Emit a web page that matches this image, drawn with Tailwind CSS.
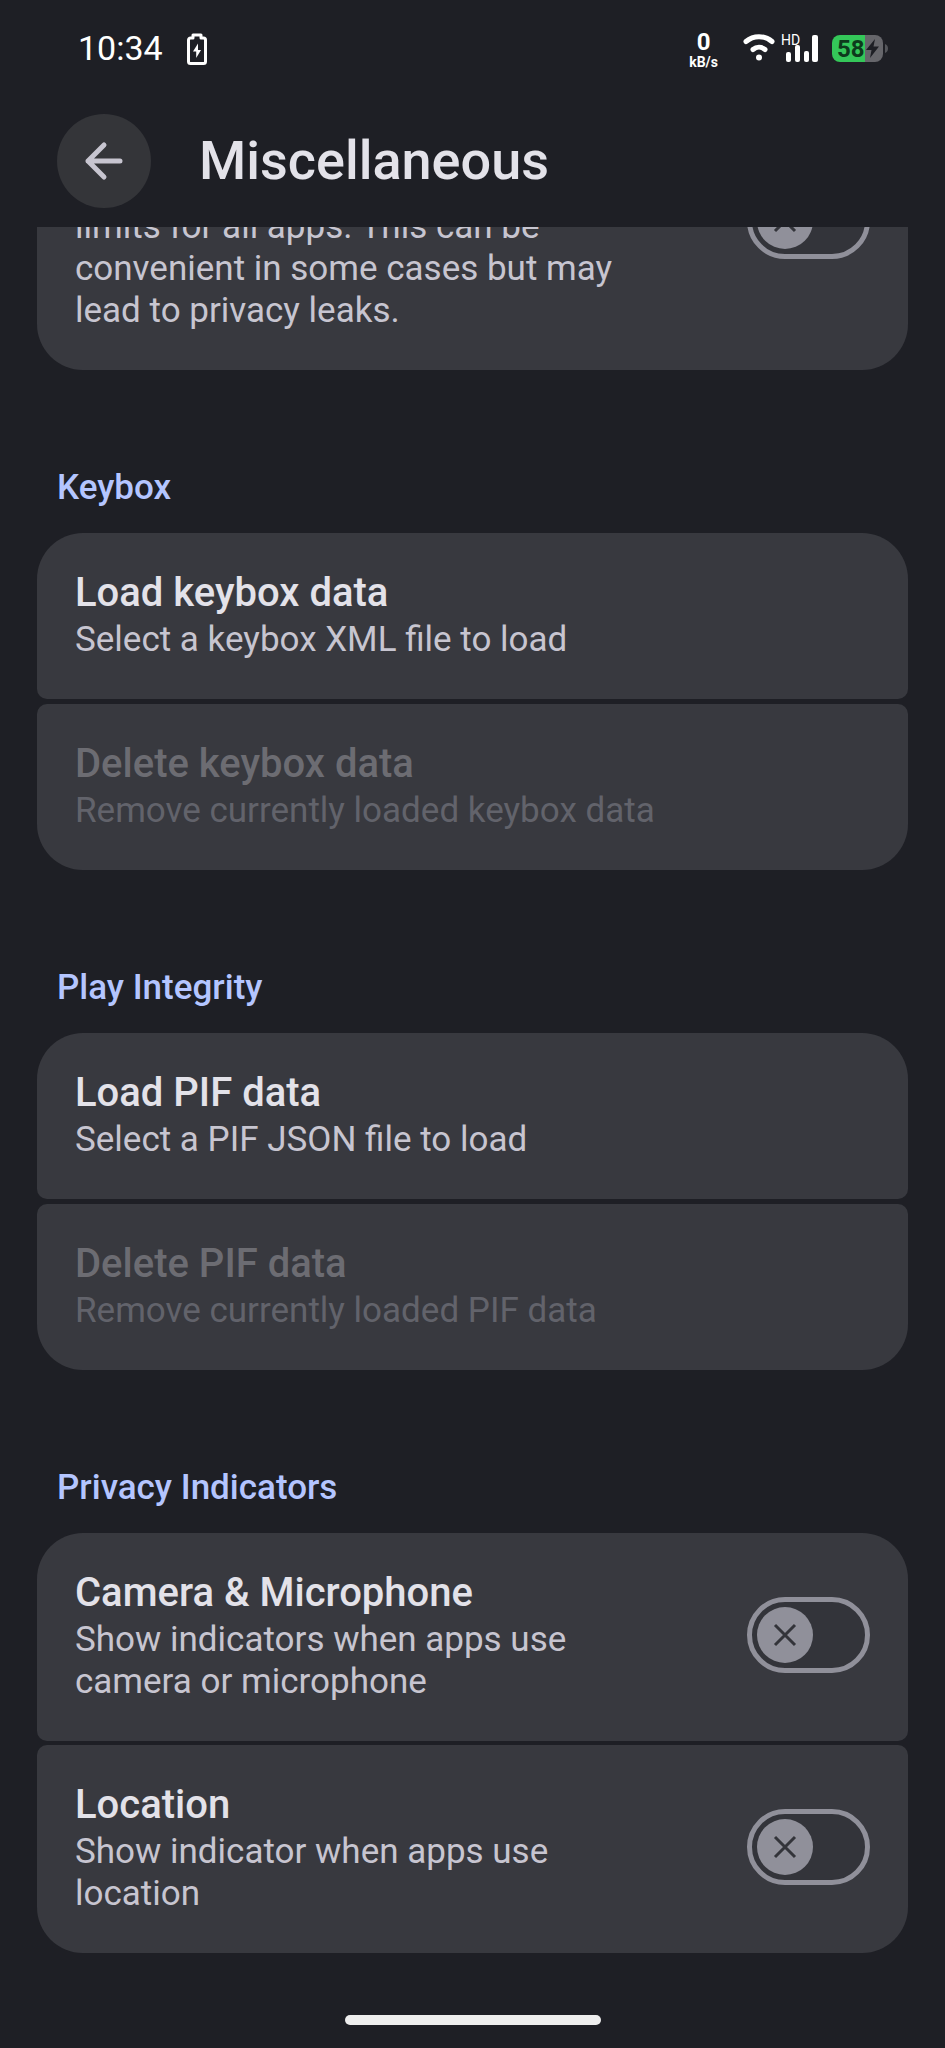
<!DOCTYPE html>
<html lang="en">
<head>
    <meta charset="UTF-8">
    <meta name="viewport" content="width=device-width, initial-scale=1.0">
    <title>Miscellaneous</title>
    <script src="https://cdn.jsdelivr.net/npm/@tailwindcss/browser@4"></script>
</head>
<body class="bg-[#1e1f25] text-[#e3e2e9] min-h-screen flex flex-col font-['Roboto','Liberation_Sans',sans-serif]">
    <!-- Status bar -->
    <div class="flex items-center justify-between h-24 pl-[78px] pr-14 text-white">
        <div class="flex items-center gap-6">
            <span class="text-[34px] leading-10">10:34</span>
            <svg class="w-5 h-9" viewBox="0 0 20 36" fill="none">
                <path d="M6 5h8v3h2.500a2 2 0 0 1 2 2v21.500a2 2 0 0 1-2 2h-13a2 2 0 0 1-2-2V10a2 2 0 0 1 2-2H6z" stroke="#fff" stroke-width="3" stroke-linejoin="round"/>
                <path d="M11 13.500 6 21.500h3.200V28l4.800-8h-3z" fill="#fff"/>
            </svg>
        </div>
        <div class="flex items-center">
            <div class="flex flex-col items-center pt-2 mr-6 font-bold">
                <span class="text-2xl leading-5">0</span>
                <span class="text-sm leading-5">kB/s</span>
            </div>
            <svg class="w-[34px] h-8 mr-1" viewBox="0 0 34 32" fill="none" stroke="#fff" stroke-width="5" stroke-linecap="round">
                <path d="M4 9.500C11.500 3 22.500 3 30 9.500"/>
                <path d="M11 17.500c3.500-3 8.500-3 12 0"/>
                <circle cx="17" cy="25.500" r="3" fill="#fff" stroke="none"/>
            </svg>
            <svg class="w-10 h-8 mr-3" viewBox="0 0 40 32">
                <text x="1" y="13" font-size="14" fill="#fff">HD</text>
                <g fill="#fff">
                    <rect x="6" y="20" width="5" height="10" rx="2"/>
                    <rect x="15" y="13" width="5" height="17" rx="2"/>
                    <rect x="24" y="19" width="5" height="11" rx="2"/>
                    <rect x="32" y="3" width="6" height="27" rx="2"/>
                </g>
            </svg>
            <svg class="w-[57px] h-[27px]" viewBox="0 0 57 27">
                <path d="M8 0h25v27H8a8 8 0 0 1-8-8V8a8 8 0 0 1 8-8z" fill="#34c759"/>
                <path d="M33 0h10a8 8 0 0 1 8 8v11a8 8 0 0 1-8 8H33z" fill="#66666b"/>
                <path d="M53 9c4 1 4 8 0 9z" fill="#55565b"/>
                <text x="5" y="22" font-size="24" font-weight="700" fill="#0d3a1c">58</text>
                <path d="M43 4 34 15h5.500L38 23l9-11.500h-5.500z" fill="#1e1f25"/>
            </svg>
        </div>
    </div>

    <!-- App bar -->
    <header class="flex items-center gap-12 px-[57px] pt-[18px] pb-[19px]">
        <button type="button" aria-label="Back" class="flex items-center justify-center size-[94px] rounded-full bg-[#343539]">
            <svg class="size-11" viewBox="0 0 44 44" fill="none" stroke="#c7c5d0" stroke-width="5" stroke-linecap="round" stroke-linejoin="round">
                <path d="M38 22H6M22 6 6 22l16 16"/>
            </svg>
        </button>
        <h1 class="text-[54px] leading-[64px] font-medium">Miscellaneous</h1>
    </header>

    <main class="px-[37px]">
        <!-- Card partly scrolled under the app bar -->
        <label class="flex items-end justify-between gap-20 h-[143px] overflow-hidden px-[38px] pb-[38px] rounded-b-[46px] bg-[#38393f]">
            <span class="text-[35px] leading-[42px] text-[#c7c5d0]">limits for all apps. This can be convenient in some cases but may lead to privacy leaks.</span>
            <span class="grid shrink-0 items-center mb-[73px]">
                <input type="checkbox" class="col-start-1 row-start-1 appearance-none w-[123px] h-[76px] rounded-full border-5 border-[#90909a] bg-[#33343a]">
                <svg class="col-start-1 row-start-1 size-14 ml-[10px] pointer-events-none" viewBox="0 0 56 56">
                    <circle cx="28" cy="28" r="28" fill="#90909a"/>
                    <path d="m18 18 20 20M38 18 18 38" stroke="#33343a" stroke-width="3"/>
                </svg>
            </span>
        </label>

        <section>
            <h2 class="pt-24 pb-[23px] pl-5 text-[35px] leading-[44px] font-medium text-[#b4c5ff]">Keybox</h2>
            <div class="flex flex-col gap-[5px]">
                <button type="button" class="block px-[38px] pt-[34px] pb-[38px] text-left bg-[#38393f] rounded-t-[46px] rounded-b-[10px]">
                    <span class="block text-[40px] leading-[52px] font-medium">Load keybox data</span>
                    <span class="block text-[35px] leading-[42px] text-[#c7c5d0]">Select a keybox XML file to load</span>
                </button>
                <button type="button" disabled class="block px-[38px] pt-[34px] pb-[38px] text-left bg-[#38393f] rounded-t-[10px] rounded-b-[46px]">
                    <span class="block text-[40px] leading-[52px] font-medium text-[#6c6c72]">Delete keybox data</span>
                    <span class="block text-[35px] leading-[42px] text-[#62636b]">Remove currently loaded keybox data</span>
                </button>
            </div>
        </section>

        <section>
            <h2 class="pt-24 pb-[23px] pl-5 text-[35px] leading-[44px] font-medium text-[#b4c5ff]">Play Integrity</h2>
            <div class="flex flex-col gap-[5px]">
                <button type="button" class="block px-[38px] pt-[34px] pb-[38px] text-left bg-[#38393f] rounded-t-[46px] rounded-b-[10px]">
                    <span class="block text-[40px] leading-[52px] font-medium">Load PIF data</span>
                    <span class="block text-[35px] leading-[42px] text-[#c7c5d0]">Select a PIF JSON file to load</span>
                </button>
                <button type="button" disabled class="block px-[38px] pt-[34px] pb-[38px] text-left bg-[#38393f] rounded-t-[10px] rounded-b-[46px]">
                    <span class="block text-[40px] leading-[52px] font-medium text-[#6c6c72]">Delete PIF data</span>
                    <span class="block text-[35px] leading-[42px] text-[#62636b]">Remove currently loaded PIF data</span>
                </button>
            </div>
        </section>

        <section>
            <h2 class="pt-24 pb-[23px] pl-5 text-[35px] leading-[44px] font-medium text-[#b4c5ff]">Privacy Indicators</h2>
            <div class="flex flex-col gap-1">
                <label class="flex items-center justify-between gap-20 px-[38px] pt-[34px] pb-[38px] bg-[#38393f] rounded-t-[46px] rounded-b-[10px]">
                    <span>
                        <span class="block text-[40px] leading-[52px] font-medium">Camera &amp; Microphone</span>
                        <span class="block text-[35px] leading-[42px] text-[#c7c5d0]">Show indicators when apps use camera or microphone</span>
                    </span>
                    <span class="grid shrink-0 items-center">
                        <input type="checkbox" class="col-start-1 row-start-1 appearance-none w-[123px] h-[76px] rounded-full border-5 border-[#90909a] bg-[#33343a]">
                        <svg class="col-start-1 row-start-1 size-14 ml-[10px] pointer-events-none" viewBox="0 0 56 56">
                            <circle cx="28" cy="28" r="28" fill="#90909a"/>
                            <path d="m18 18 20 20M38 18 18 38" stroke="#33343a" stroke-width="3"/>
                        </svg>
                    </span>
                </label>
                <label class="flex items-center justify-between gap-20 px-[38px] pt-[34px] pb-[38px] bg-[#38393f] rounded-t-[10px] rounded-b-[46px]">
                    <span>
                        <span class="block text-[40px] leading-[52px] font-medium">Location</span>
                        <span class="block text-[35px] leading-[42px] text-[#c7c5d0]">Show indicator when apps use location</span>
                    </span>
                    <span class="grid shrink-0 items-center">
                        <input type="checkbox" class="col-start-1 row-start-1 appearance-none w-[123px] h-[76px] rounded-full border-5 border-[#90909a] bg-[#33343a]">
                        <svg class="col-start-1 row-start-1 size-14 ml-[10px] pointer-events-none" viewBox="0 0 56 56">
                            <circle cx="28" cy="28" r="28" fill="#90909a"/>
                            <path d="m18 18 20 20M38 18 18 38" stroke="#33343a" stroke-width="3"/>
                        </svg>
                    </span>
                </label>
            </div>
        </section>
    </main>

    <!-- Home indicator -->
    <div class="flex justify-center mt-auto pt-[61px] pb-[23px]">
        <div class="w-64 h-[10px] rounded-full bg-[#eeeeee]"></div>
    </div>
</body>
</html>
